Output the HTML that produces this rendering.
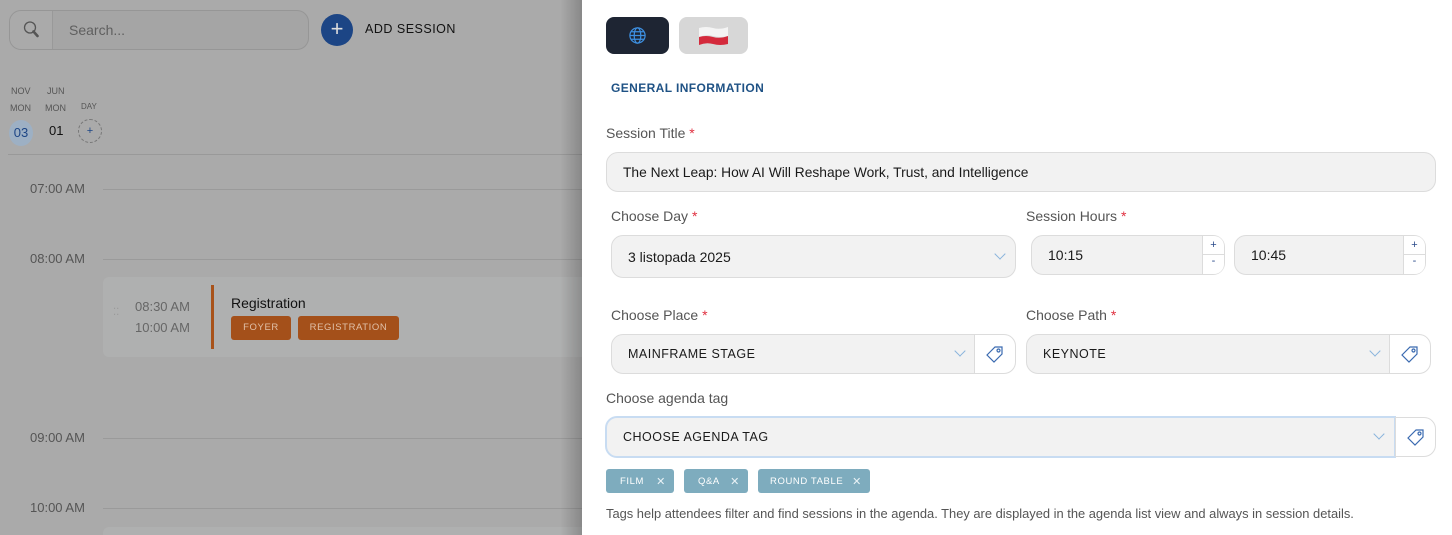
<!DOCTYPE html>
<html><head><meta charset="utf-8"><style>
*{box-sizing:border-box;margin:0;padding:0}
body{width:1452px;height:535px;overflow:hidden;position:relative;font-family:"Liberation Sans",sans-serif;background:#fff}
.abs{position:absolute}
.left{left:0;top:0;width:582px;height:535px;background:#aaaaaa;overflow:hidden}
.shadow{left:560px;top:0;width:22px;height:535px;background:linear-gradient(90deg,rgba(0,0,0,0),rgba(0,0,0,.2))}
.t{color:#555;font-size:13px}
.line{height:1px;background:#9a9a9a;left:103px;width:480px}
.lbl{font-size:14px;color:#555}
.lbl b{color:#e03040;font-weight:normal}
.inp{background:#f2f2f2;border:1px solid #dcdcdc;border-radius:12px;font-size:14px;color:#1a1a1a;display:flex;align-items:center;padding-left:16px}
.sel{font-size:12.5px;letter-spacing:.5px;color:#1a1a1a}
.chev{position:absolute;width:8px;height:8px;border-right:1.3px solid #8ab4dc;border-bottom:1.3px solid #8ab4dc;transform:rotate(45deg)}
.tagb{background:#fff;border:1px solid #dcdcdc;border-radius:0 12px 12px 0;display:flex;align-items:center;justify-content:center}
.pm{background:#fff;border-left:1px solid #dcdcdc;width:22px;position:absolute;right:0;top:0;bottom:0;border-radius:0 10px 10px 0;font-size:11px;color:#2a4a8a;text-align:center}
.chip{background:#7eacbe;color:#fff;font-size:9.5px;letter-spacing:.6px;border-radius:3px;height:24px;top:469px;display:flex;align-items:center;padding-left:14px}
.chip span{position:absolute;right:8px;font-size:11px;color:#e8f2f6}
</style></head><body>
<div class="abs left">
  <div class="abs" style="left:9px;top:10px;width:300px;height:40px;border:1px solid #969696;border-radius:12px;background:#a5a5a5;overflow:hidden">
    <div class="abs" style="left:0;top:0;width:43px;height:38px;background:#aaaaaa;border-right:1px solid #999"></div>
    <svg class="abs" style="left:12px;top:9px" width="20" height="20" viewBox="0 0 20 20"><circle cx="8" cy="7.5" r="5.5" fill="none" stroke="#555" stroke-width="1.3"/><path d="M11.5 11.5 L15.5 16" stroke="#555" stroke-width="2.6" stroke-linecap="round"/></svg>
    <div class="abs" style="left:59px;top:11px;font-size:14px;color:#5f5f5f">Search...</div>
  </div>
  <div class="abs" style="left:321px;top:14px;width:32px;height:32px;border-radius:50%;background:#1c4585;color:#ddd;font-size:22px;line-height:30px;text-align:center">+</div>
  <div class="abs" style="left:365px;top:22px;font-size:12.5px;color:#111;letter-spacing:.5px">ADD SESSION</div>
  <div class="abs" style="left:11px;top:86px;font-size:9px;color:#555">NOV</div>
  <div class="abs" style="left:10px;top:103px;font-size:9px;color:#555">MON</div>
  <div class="abs" style="left:47px;top:86px;font-size:9px;color:#555">JUN</div>
  <div class="abs" style="left:45px;top:103px;font-size:9px;color:#555">MON</div>
  <div class="abs" style="left:81px;top:102px;font-size:8px;color:#555">DAY</div>
  <div class="abs" style="left:9px;top:120px;width:24px;height:26px;border-radius:50%;background:#9db0c4;color:#1c4585;font-size:13px;text-align:center;line-height:26px">03</div>
  <div class="abs" style="left:49px;top:123px;font-size:13px;color:#111">01</div>
  <div class="abs" style="top:119px;width:24px;height:24px;border:1px dashed #777;border-radius:50%;color:#1c4585;font-size:11px;text-align:center;line-height:22px;left:78px">+</div>
  <div class="abs" style="left:8px;top:154px;width:580px;height:1px;background:#999"></div>
  <div class="abs t" style="left:30px;top:181px">07:00 AM</div><div class="abs line" style="top:189px"></div>
  <div class="abs t" style="left:30px;top:251px">08:00 AM</div><div class="abs line" style="top:259px"></div>
  <div class="abs t" style="left:30px;top:430px">09:00 AM</div><div class="abs line" style="top:438px"></div>
  <div class="abs t" style="left:30px;top:500px">10:00 AM</div><div class="abs line" style="top:508px"></div>
  <div class="abs" style="top:277px;width:500px;height:80px;background:#afb0b0;border-radius:6px;left:103px"></div>
  <div class="abs" style="left:103px;top:527px;width:500px;height:20px;background:#afb0b0;border-radius:6px"></div>
  <div class="abs" style="left:113px;top:310px;color:#999;font-size:10px;line-height:5px">⁚⁚</div>
  <div class="abs t" style="left:135px;top:299px;color:#666">08:30 AM</div>
  <div class="abs t" style="left:135px;top:320px;color:#666">10:00 AM</div>
  <div class="abs" style="left:211px;top:285px;width:3px;height:64px;background:#a8521a"></div>
  <div class="abs" style="left:231px;top:295px;font-size:14px;color:#111">Registration</div>
  <div class="abs" style="left:231px;top:316px;width:60px;height:24px;background:#a4501a;border-radius:3px;color:#e0c0a8;font-size:9.5px;letter-spacing:.6px;text-align:center;line-height:24px">FOYER</div>
  <div class="abs" style="left:298px;top:316px;width:101px;height:24px;background:#a4501a;border-radius:3px;color:#e0c0a8;font-size:9.5px;letter-spacing:.6px;text-align:center;line-height:24px">REGISTRATION</div>
</div>
<div class="abs shadow"></div>

<div class="abs" style="left:606px;top:17px;width:63px;height:37px;background:#1e2533;border-radius:8px"></div>
<svg class="abs" style="left:628px;top:26px" width="19" height="19" viewBox="0 0 20 20" fill="none" stroke="#3d8fe0" stroke-width="1.3"><circle cx="10" cy="10" r="8"/><ellipse cx="10" cy="10" rx="3.5" ry="8"/><path d="M2 10H18M3.5 6H16.5M3.5 14H16.5"/></svg>
<div class="abs" style="left:679px;top:17px;width:69px;height:37px;background:#d7d7d7;border-radius:8px"></div>
<svg class="abs" style="left:698px;top:26px" width="31" height="20" viewBox="0 0 31 20"><path d="M1 2 Q8 0 15 2 T30 1 V10 Q22 12 15 10 T1 11Z" fill="#f4f4f4"/><path d="M1 11 Q8 9 15 11 T30 10 V18 Q22 20 15 18 T1 19Z" fill="#d42a3c"/></svg>
<div class="abs" style="left:611px;top:81px;font-size:12px;font-weight:bold;color:#1f5285;letter-spacing:.4px">GENERAL INFORMATION</div>

<div class="abs lbl" style="left:606px;top:125px">Session Title <b>*</b></div>
<div class="abs inp" style="left:606px;top:152px;width:830px;height:40px;font-size:13.8px">The Next Leap: How AI Will Reshape Work, Trust, and Intelligence</div>

<div class="abs lbl" style="left:611px;top:208px">Choose Day <b>*</b></div>
<div class="abs inp" style="left:611px;top:235px;width:405px;height:43px">3 listopada 2025<div class="chev" style="left:384px;top:14px"></div></div>
<div class="abs lbl" style="left:1026px;top:208px">Session Hours <b>*</b></div>
<div class="abs inp" style="left:1031px;top:235px;width:194px;height:40px">10:15<div class="pm"><div style="height:19px;border-bottom:1px solid #dcdcdc;line-height:18px">+</div><div>-</div></div></div>
<div class="abs inp" style="left:1234px;top:235px;width:192px;height:40px">10:45<div class="pm"><div style="height:19px;border-bottom:1px solid #dcdcdc;line-height:18px">+</div><div>-</div></div></div>

<div class="abs lbl" style="left:611px;top:307px">Choose Place <b>*</b></div>
<div class="abs inp sel" style="left:611px;top:334px;width:364px;height:40px;border-radius:12px 0 0 12px">MAINFRAME STAGE<div class="chev" style="left:344px;top:12px"></div></div>
<div class="abs tagb" style="left:974px;top:334px;width:42px;height:40px"><svg width="20" height="20" viewBox="0 0 20 20" fill="none" stroke="#3a6ab0" stroke-width="1.2"><path d="M2 11 L10 3 H17 V10 L9 18Z"/><circle cx="13.5" cy="6.5" r="1.5"/></svg></div>
<div class="abs lbl" style="left:1026px;top:307px">Choose Path <b>*</b></div>
<div class="abs inp sel" style="left:1026px;top:334px;width:364px;height:40px;border-radius:12px 0 0 12px">KEYNOTE<div class="chev" style="left:344px;top:12px"></div></div>
<div class="abs tagb" style="left:1389px;top:334px;width:42px;height:40px"><svg width="20" height="20" viewBox="0 0 20 20" fill="none" stroke="#3a6ab0" stroke-width="1.2"><path d="M2 11 L10 3 H17 V10 L9 18Z"/><circle cx="13.5" cy="6.5" r="1.5"/></svg></div>

<div class="abs lbl" style="left:606px;top:390px">Choose agenda tag</div>
<div class="abs inp sel" style="left:605px;top:416px;width:791px;height:42px;border:2px solid #c8dcf2;border-radius:12px 0 0 12px">CHOOSE AGENDA TAG<div class="chev" style="left:768px;top:12px"></div></div>
<div class="abs tagb" style="left:1395px;top:417px;width:41px;height:40px"><svg width="20" height="20" viewBox="0 0 20 20" fill="none" stroke="#3a6ab0" stroke-width="1.2"><path d="M2 11 L10 3 H17 V10 L9 18Z"/><circle cx="13.5" cy="6.5" r="1.5"/></svg></div>

<div class="abs chip" style="left:606px;width:68px">FILM<span>✕</span></div>
<div class="abs chip" style="left:684px;width:64px">Q&amp;A<span>✕</span></div>
<div class="abs chip" style="left:758px;width:112px;padding-left:12px">ROUND TABLE<span>✕</span></div>
<div class="abs" style="left:606px;top:506px;font-size:12.9px;color:#555">Tags help attendees filter and find sessions in the agenda. They are displayed in the agenda list view and always in session details.</div>
</body></html>
